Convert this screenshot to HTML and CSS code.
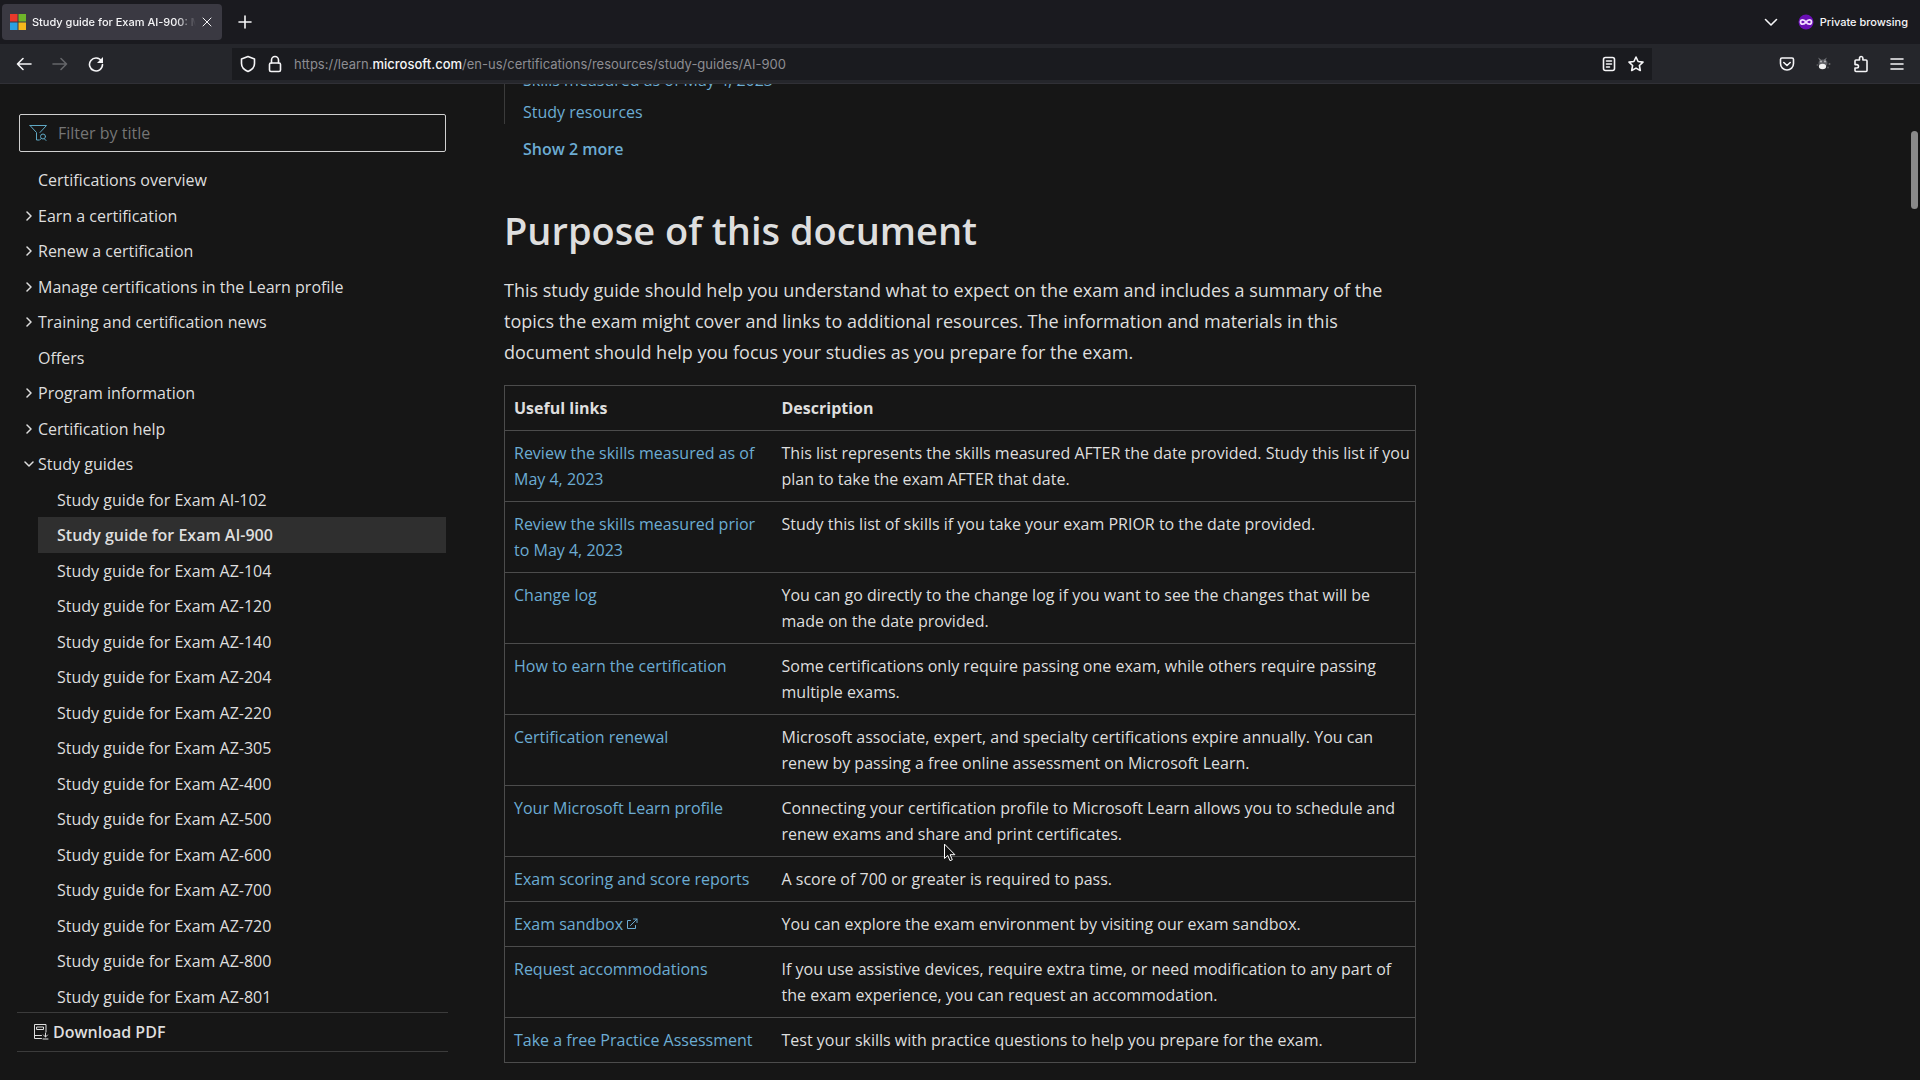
FILE: index.html
```html
<!DOCTYPE html>
<html lang="en">
<head>
<meta charset="utf-8">
<meta name="viewport" content="width=device-width, initial-scale=1">
<title>Study guide for Exam AI-900: Microsoft Azure AI Fundamentals</title>
<link rel="stylesheet" href="styles.css">
</head>
<body>
<header class="browser">
  <div class="tabstrip">
    <div class="tab">
      <svg class="favicon" width="16" height="16" viewBox="0 0 16 16"><path fill="#e8392b" d="M0 0h7.5v7.5H0z"/><path fill="#6fb52a" d="M8.500 0H16v7.500H8.500z"/><path fill="#2ba0e0" d="M0 8.500h7.500V16H0z"/><path fill="#f5b81c" d="M8.500 8.500H16V16H8.500z"/></svg>
      <span class="tab-title">Study guide for Exam AI-900: M</span>
      <button class="icon-btn" type="button" aria-label="Close tab"><svg width="10" height="10" viewBox="0 0 10 10"><path d="M1 1l8 8M9 1L1 9"/></svg></button>
    </div>
    <button class="icon-btn new-tab" type="button" aria-label="New tab"><svg width="14" height="14" viewBox="0 0 14 14"><path class="bold" d="M7 1v12M1 7h12"/></svg></button>
    <button class="icon-btn list-tabs" type="button" aria-label="List all tabs"><svg width="14" height="14" viewBox="0 0 14 14"><path class="bold" d="M1.500 4.500L7 10l5.500-5.500"/></svg></button>
    <div class="private">
      <svg width="16" height="16" viewBox="0 0 16 16"><circle cx="8" cy="8" r="7.500" fill="#6a0fb5"/><path d="M8 8C7 6.500 6 5.800 4.700 5.800a2.200 2.200 0 0 0 0 4.400C6 10.200 7 9.500 8 8zm0 0c1 1.500 2 2.200 3.300 2.200a2.200 2.200 0 0 0 0-4.400C10 5.800 9 6.500 8 8z" stroke="#f3dcff" stroke-width="1.800"/></svg>
      <span>Private browsing</span>
    </div>
  </div>
  <div class="toolbar">
    <div class="nav-buttons">
      <button class="icon-btn" type="button" aria-label="Back"><svg width="16" height="16" viewBox="0 0 16 16"><path class="bold" d="M15 8H1.500M7 2.500L1.500 8 7 13.500"/></svg></button>
      <button class="icon-btn" type="button" aria-label="Forward" disabled><svg width="16" height="16" viewBox="0 0 16 16"><path class="bold" d="M1 8h13.500M9 2.500L14.500 8 9 13.500"/></svg></button>
      <button class="icon-btn" type="button" aria-label="Reload"><svg width="16" height="16" viewBox="0 0 16 16"><path class="bold" d="M13.500 5A6.500 6.500 0 1 0 14.500 8.500"/><path fill="#f5f5f7" stroke="none" d="M15 1v6H9z"/></svg></button>
    </div>
    <div class="urlbar">
      <svg width="16" height="18" viewBox="0 0 16 18"><path class="bold" d="M8 1.500l6.500 2.500v4.500c0 3.800-3 6.500-6.500 8-3.500-1.500-6.500-4.200-6.500-8V4z"/></svg>
      <svg width="14" height="18" viewBox="0 0 14 18"><rect class="bold" x="1.500" y="8" width="11" height="8.500" rx="1.500"/><path class="bold" d="M3.500 8V5a3.500 3.500 0 0 1 7 0v3"/></svg>
      <div class="url">https://learn.<b>microsoft.com</b>/en-us/certifications/resources/study-guides/AI-900</div>
      <button class="icon-btn" type="button" aria-label="Reader view"><svg width="14" height="16" viewBox="0 0 14 16"><rect class="bold" x="1.500" y="1.500" width="11" height="13" rx="2"/><path class="bold" d="M4.500 5h5M4.500 8h5M4.500 11h3"/></svg></button>
      <button class="icon-btn" type="button" aria-label="Bookmark"><svg width="16" height="16" viewBox="0 0 16 16"><path class="bold" d="M8 1l2.100 4.500 4.900.6-3.600 3.400.9 5L8 12.100l-4.300 2.400.9-5L1 6.100l4.900-.6z"/></svg></button>
    </div>
    <div class="actions">
      <button class="icon-btn" type="button" aria-label="Pocket"><svg width="16" height="16" viewBox="0 0 16 16"><path class="bold" d="M3 2h10a1.500 1.500 0 0 1 1.500 1.500V7.500a6.500 6.500 0 0 1-13 0V3.500A1.500 1.500 0 0 1 3 2z"/><path class="bold" d="M4.800 6.500L8 9.500l3.200-3"/></svg></button>
      <button class="icon-btn" type="button" aria-label="Extension"><svg width="16" height="16" viewBox="0 0 16 16"><g stroke="none"><ellipse cx="7" cy="7" rx="4.500" ry="3.500" fill="#5e5f64"/><path d="M2 1.500l3 2-1 1.500zM11 1.500l-3 2 1 1.500z" fill="#77787c"/><circle cx="5" cy="5.500" r="1" fill="#b5b5b8"/><circle cx="9" cy="5.500" r="1" fill="#b5b5b8"/><ellipse cx="6.500" cy="10.500" rx="3.600" ry="2.800" fill="#f0f0f0"/><circle cx="1.500" cy="9" r="1" fill="#55565a"/><circle cx="13.500" cy="8" r="1" fill="#66676b"/><circle cx="12" cy="11.500" r="1" fill="#55565a"/></g></svg></button>
      <button class="icon-btn" type="button" aria-label="Extensions"><svg width="16" height="18" viewBox="0 0 16 18"><path class="bold" d="M6.500 5V3.200a1.700 1.700 0 0 1 3.400 0V5H13a1 1 0 0 1 1 1v9.500a1 1 0 0 1-1 1H3a1 1 0 0 1-1-1V13h1.800a1.700 1.700 0 0 0 0-3.400H2V6a1 1 0 0 1 1-1z"/></svg></button>
      <button class="icon-btn" type="button" aria-label="Menu"><svg width="14" height="14" viewBox="0 0 14 14"><path class="bold" d="M1 2h12M1 7h12M1 12h12"/></svg></button>
    </div>
  </div>
</header>

<div class="page">
  <aside class="sidebar">
    <label class="filter">
      <svg width="20" height="18" viewBox="0 0 20 18"><path d="M1 1.500h16.500L11 8.500M1 1.500l6.500 7V16H10"/><circle cx="14" cy="12.500" r="2.500"/><path d="M12.200 14.500l-1.500 1.500M15.500 15l1.500 1.500"/></svg>
      <input type="text" placeholder="Filter by title" aria-label="Filter by title">
    </label>
    <nav class="toc" aria-label="Table of contents">
      <ul class="tree">
        <li><a href="#">Certifications overview</a></li>
        <li class="branch"><svg width="8" height="10" viewBox="0 0 8 10"><path d="M2 1l4 4-4 4"/></svg><a href="#">Earn a certification</a></li>
        <li class="branch"><svg width="8" height="10" viewBox="0 0 8 10"><path d="M2 1l4 4-4 4"/></svg><a href="#">Renew a certification</a></li>
        <li class="branch"><svg width="8" height="10" viewBox="0 0 8 10"><path d="M2 1l4 4-4 4"/></svg><a href="#">Manage certifications in the Learn profile</a></li>
        <li class="branch"><svg width="8" height="10" viewBox="0 0 8 10"><path d="M2 1l4 4-4 4"/></svg><a href="#">Training and certification news</a></li>
        <li><a href="#">Offers</a></li>
        <li class="branch"><svg width="8" height="10" viewBox="0 0 8 10"><path d="M2 1l4 4-4 4"/></svg><a href="#">Program information</a></li>
        <li class="branch"><svg width="8" height="10" viewBox="0 0 8 10"><path d="M2 1l4 4-4 4"/></svg><a href="#">Certification help</a></li>
        <li class="branch"><svg width="10" height="8" viewBox="0 0 10 8"><path d="M1 2l4 4 4-4"/></svg><a href="#">Study guides</a></li>
      </ul>
      <ul class="tree subtree">
        <li><a href="#">Study guide for Exam AI-102</a></li>
        <li class="current"><a href="#" aria-current="page">Study guide for Exam AI-900</a></li>
        <li><a href="#">Study guide for Exam AZ-104</a></li>
        <li><a href="#">Study guide for Exam AZ-120</a></li>
        <li><a href="#">Study guide for Exam AZ-140</a></li>
        <li><a href="#">Study guide for Exam AZ-204</a></li>
        <li><a href="#">Study guide for Exam AZ-220</a></li>
        <li><a href="#">Study guide for Exam AZ-305</a></li>
        <li><a href="#">Study guide for Exam AZ-400</a></li>
        <li><a href="#">Study guide for Exam AZ-500</a></li>
        <li><a href="#">Study guide for Exam AZ-600</a></li>
        <li><a href="#">Study guide for Exam AZ-700</a></li>
        <li><a href="#">Study guide for Exam AZ-720</a></li>
        <li><a href="#">Study guide for Exam AZ-800</a></li>
        <li><a href="#">Study guide for Exam AZ-801</a></li>
      </ul>
    </nav>
    <div class="download">
      <button type="button"><svg width="16" height="18" viewBox="0 0 16 18"><path d="M13 9V1.500H1.500V15.500h7M1.500 12.500h7M4 4h6.500v2.500H4zM12.500 10v4M10.500 12l2 2 2-2M10 16h5"/></svg>Download PDF</button>
    </div>
  </aside>

  <main class="article">
    <ul class="in-page">
      <li><a href="#">Skills measured as of May 4, 2023</a></li>
      <li><a href="#">Study resources</a></li>
    </ul>
    <button class="show-more" type="button">Show 2 more</button>
    <h2>Purpose of this document</h2>
    <p>This study guide should help you understand what to expect on the exam and includes a summary of the topics the exam might cover and links to additional resources. The information and materials in this document should help you focus your studies as you prepare for the exam.</p>
    <table>
      <thead><tr><th class="links" scope="col">Useful links</th><th scope="col">Description</th></tr></thead>
      <tbody>
        <tr><td><a href="#">Review the skills measured as of May 4, 2023</a></td><td>This list represents the skills measured AFTER the date provided. Study this list if you plan to take the exam AFTER that date.</td></tr>
        <tr><td><a href="#">Review the skills measured prior to May 4, 2023</a></td><td>Study this list of skills if you take your exam PRIOR to the date provided.</td></tr>
        <tr><td><a href="#">Change log</a></td><td>You can go directly to the change log if you want to see the changes that will be made on the date provided.</td></tr>
        <tr><td><a href="#">How to earn the certification</a></td><td>Some certifications only require passing one exam, while others require passing multiple exams.</td></tr>
        <tr><td><a href="#">Certification renewal</a></td><td>Microsoft associate, expert, and specialty certifications expire annually. You can renew by passing a free online assessment on Microsoft Learn.</td></tr>
        <tr><td><a href="#">Your Microsoft Learn profile</a></td><td>Connecting your certification profile to Microsoft Learn allows you to schedule and renew exams and share and print certificates.</td></tr>
        <tr><td><a href="#">Exam scoring and score reports</a></td><td>A score of 700 or greater is required to pass.</td></tr>
        <tr><td><a href="#">Exam sandbox<svg class="external" width="12" height="12" viewBox="0 0 12 12"><path d="M4.500 2.500h-3v8h8v-3M4.500 7.500l6.500-6.500M7.500 1H11v3.500"/></svg></a></td><td>You can explore the exam environment by visiting our exam sandbox.</td></tr>
        <tr><td><a href="#">Request accommodations</a></td><td>If you use assistive devices, require extra time, or need modification to any part of the exam experience, you can request an accommodation.</td></tr>
        <tr><td><a href="#">Take a free Practice Assessment</a></td><td>Test your skills with practice questions to help you prepare for the exam.</td></tr>
      </tbody>
    </table>
  </main>
  <div class="scroll-thumb"></div>
</div>
<svg class="pointer" width="14" height="20" viewBox="0 0 14 20"><path d="M1.500 1.500v14l3.300-3 2.200 5.200 2.300-1-2.200-5h4.400z"/></svg>
</body>
</html>
```
FILE: styles.css
```css
* { box-sizing: border-box; }

body {
  margin: 0;
  height: 100vh;
  display: flex;
  flex-direction: column;
  overflow: hidden;
  background: #161616;
  color: #dedede;
  font-family: "Open Sans", "Noto Sans", sans-serif;
  font-size: 16px;
}

ul { list-style: none; margin: 0; padding: 0; }
a { color: inherit; text-decoration: none; }
button { border: 0; padding: 0; background: none; color: inherit; font: inherit; cursor: pointer; }
svg { display: block; flex: none; fill: none; stroke: currentColor; stroke-width: 1; stroke-linecap: round; stroke-linejoin: round; }
.favicon, .private svg { stroke: none; }

/* Browser chrome */
.browser { font-family: Inter, sans-serif; color: #f5f5f7; }
.icon-btn { display: flex; align-items: center; justify-content: center; }
.icon-btn:disabled { opacity: 0.3; }
.bold { stroke-width: 1.6; }

.tabstrip {
  display: flex;
  align-items: center;
  height: 44px;
  padding: 0 12px 0 2px;
  background: #1a1a1f;
  font-size: 11px;
  font-weight: 500;
}
.tab {
  display: flex;
  align-items: center;
  gap: 6px;
  width: 220px;
  height: 36px;
  padding: 0 10px 0 8px;
  border-radius: 4px;
  background: #3a3942;
}
.tab-title {
  flex: 1;
  overflow: hidden;
  white-space: nowrap;
  mask-image: linear-gradient(to right, #000 88%, transparent);
}
.new-tab { margin-left: 16px; }
.list-tabs { margin-left: auto; }
.private { display: flex; align-items: center; gap: 6px; margin-left: 20px; }

.toolbar {
  display: flex;
  align-items: center;
  height: 40px;
  padding: 0 16px;
  background: #25262b;
  border-bottom: 1px solid #303036;
}
.nav-buttons { display: flex; gap: 20px; width: 216px; }
.urlbar {
  flex: 1;
  display: flex;
  align-items: center;
  gap: 12px;
  height: 32px;
  padding: 0 8px;
  background: #1a1b1f;
}
.url { flex: 1; font-size: 13px; color: #8d8d92; }
.url b { font-weight: 500; color: #f5f5f7; }
.actions { display: flex; justify-content: flex-end; gap: 21px; width: 252px; }

/* Page frame */
.page {
  position: relative;
  flex: 1;
  min-height: 0;
  display: flex;
  gap: 56px;
  overflow: hidden;
}

.sidebar {
  display: flex;
  flex-direction: column;
  width: 448px;
  padding: 30px 0 28px 17px;
}
.filter {
  display: flex;
  align-items: center;
  gap: 9px;
  height: 38px;
  margin: 0 2px;
  padding: 0 9px;
  border: 1px solid #d0d0d0;
  border-radius: 2px;
  color: #5fa8c4;
}
.filter input {
  flex: 1;
  min-width: 0;
  padding: 0;
  border: 0;
  outline: 0;
  background: none;
  color: #dedede;
  font: inherit;
}
.filter input::placeholder { color: #757575; opacity: 1; }

.toc { flex: 1; min-height: 0; margin: 10px 2px 0; overflow: hidden; }
.tree { display: grid; grid-auto-rows: 36px 35px; padding-left: 19px; }
.tree li { display: flex; align-items: center; }
.tree a { flex: 1; }
.tree svg { width: 10px; margin: 0 4px 0 -14px; stroke-width: 1.5; }
.subtree { grid-auto-rows: 35px 36px; }
.subtree li { padding-left: 19px; }
.current { background: #2f2f2f; font-weight: 600; }

.download {
  border-top: 1px solid #3b3b3b;
  border-bottom: 1px solid #3b3b3b;
}
.download button {
  display: flex;
  align-items: center;
  gap: 4px;
  height: 38px;
  padding-left: 16px;
  font-weight: 600;
}

/* Article */
.article { flex: 1; max-width: 912px; margin-top: -16px; line-height: 26px; }
.article a, .show-more { color: #6cacd3; }
.in-page {
  display: grid;
  gap: 8px;
  padding-left: 18px;
  border-left: 1px solid #3b3b3b;
  line-height: 24px;
}
.show-more { display: block; margin: 13px 0 0 19px; font-weight: 600; line-height: 24px; }
h2 { margin: 45px 0 21px; font-size: 38px; font-weight: 600; line-height: 48px; }
p { margin: 0 0 17px; font-size: 18px; line-height: 31px; }

table { width: 100%; border: 1px solid #4c4c4c; border-collapse: collapse; }
th, td {
  padding: 9px 0 9px 9px;
  border-top: 1px solid #4c4c4c;
  text-align: left;
  vertical-align: top;
}
.links { width: 268px; }
th { font-weight: 700; }
.external { display: inline-block; margin-left: 3px; }

.scroll-thumb {
  position: absolute;
  top: 47px;
  right: 2px;
  width: 7px;
  height: 78px;
  border-radius: 4px;
  background: #8a8a8a;
}
.pointer {
  position: absolute;
  left: 943px;
  top: 843px;
  fill: #111;
  stroke: #fff;
}
```
